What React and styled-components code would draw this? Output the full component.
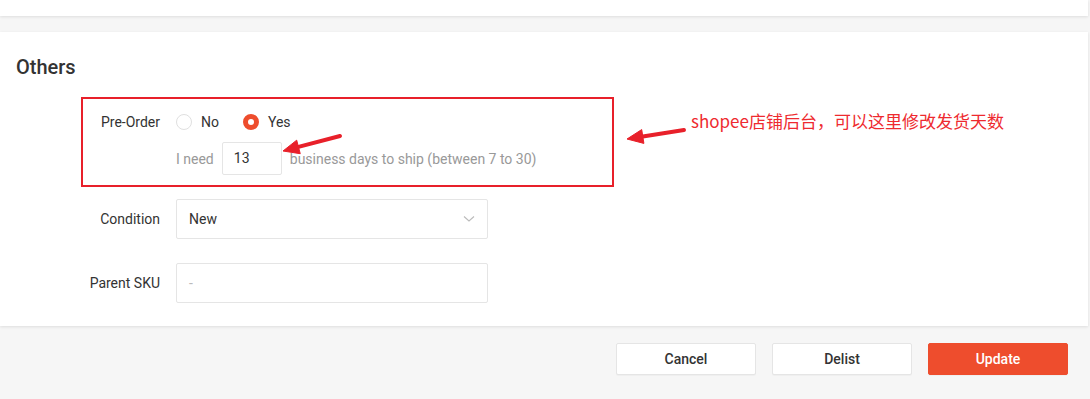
import React from 'react'
import styled, { createGlobalStyle } from 'styled-components'

const GlobalStyle = createGlobalStyle`
  html, body {
    margin: 0;
    padding: 0;
    background: #f6f6f6;
    font-family: Roboto, "Noto Sans", "Liberation Sans", sans-serif;
    color: #333;
  }
`

const Page = styled.div`
  position: relative;
  width: 1090px;
  height: 399px;
  overflow: hidden;
  background: #f6f6f6;
`

const TopCard = styled.div`
  height: 16px;
  margin-right: 2px;
  background: #fff;
  box-shadow: 0 1px 3px rgba(0, 0, 0, 0.1);
`

const Card = styled.div`
  margin-top: 16px;
  margin-right: 2px;
  padding: 24px 16px 23px;
  background: #fff;
  box-shadow: 0 1px 3px rgba(0, 0, 0, 0.1);
`

const Title = styled.div`
  font-size: 20px;
  line-height: 22px;
  font-weight: 500;
  color: #333;
`

const Form = styled.div`
  margin-top: 33px;
  display: flex;
  flex-direction: column;
  gap: 24px;
`

const Row = styled.div`
  display: flex;
  align-items: flex-start;
  gap: 16px;
`

const Label = styled.div`
  width: 144px;
  text-align: right;
  font-size: 14px;
  line-height: ${p => p.$lh || 22}px;
  color: #333;
`

const Control = styled.div`
  display: flex;
  flex-direction: column;
  gap: 9px;
`

const RadioGroup = styled.div`
  display: flex;
  align-items: center;
  height: 22px;
  gap: 24px;
`

const RadioItem = styled.label`
  display: flex;
  align-items: center;
  gap: 9px;
  font-size: 14px;
  color: #333;
`

const RadioDot = styled.span`
  box-sizing: border-box;
  width: 16px;
  height: 16px;
  border-radius: 50%;
  border: ${p => (p.$on ? '5px solid #ee4d2d' : '1px solid #e0e0e0')};
  background: #fff;
`

const DaysLine = styled.div`
  display: flex;
  align-items: center;
  gap: 8px;
  font-size: 14px;
  color: #999;
`

const SmallInput = styled.div`
  box-sizing: border-box;
  width: 60px;
  height: 33px;
  padding: 0 11px;
  border: 1px solid #e5e5e5;
  border-radius: 2px;
  line-height: 31px;
  color: #333;
  font-size: 14px;
`

const Field = styled.div`
  box-sizing: border-box;
  width: 312px;
  height: 40px;
  padding: 0 12px;
  display: flex;
  align-items: center;
  justify-content: space-between;
  border: 1px solid #e5e5e5;
  border-radius: 2px;
  font-size: 14px;
  color: ${p => (p.$muted ? '#bbb' : '#333')};
`

const Footer = styled.div`
  display: flex;
  justify-content: flex-end;
  gap: 16px;
  padding: 17px 22px 0 0;
`

const Button = styled.button`
  box-sizing: border-box;
  width: 140px;
  height: 32px;
  border-radius: 2px;
  border: 1px solid ${p => (p.$primary ? '#ee4d2d' : '#e5e5e5')};
  background: ${p => (p.$primary ? '#ee4d2d' : '#fff')};
  color: ${p => (p.$primary ? '#fff' : '#333')};
  font-family: Roboto, "Liberation Sans", sans-serif;
  font-size: 14px;
  font-weight: 500;
  box-shadow: 0 1px 1px rgba(0, 0, 0, 0.03);
`

const Highlight = styled.div`
  position: absolute;
  left: 81px;
  top: 97px;
  width: 533px;
  height: 90px;
  box-sizing: border-box;
  border: 2px solid #e8202a;
  pointer-events: none;
`

const Note = styled.div`
  position: absolute;
  left: 691px;
  top: 109px;
  font-family: "Noto Sans CJK SC", "Liberation Sans", sans-serif;
  font-size: 17px;
  line-height: 24px;
  color: #ee2a2f;
  white-space: nowrap;
`

const Arrows = styled.svg`
  position: absolute;
  left: 0;
  top: 0;
  pointer-events: none;
`

const Chevron = () => (
  <svg width="12" height="8" viewBox="0 0 12 8">
    <path d="M1 1.5 L6 6 L11 1.5" fill="none" stroke="#bbb" strokeWidth="1.1" />
  </svg>
)

const Arrow = ({ x1, y1, x2, y2 }) => {
  const a = Math.atan2(y2 - y1, x2 - x1)
  const len = 16
  const w = 7
  const bx = x2 - Math.cos(a) * len
  const by = y2 - Math.sin(a) * len
  const px = -Math.sin(a) * w
  const py = Math.cos(a) * w
  return (
    <g fill="#e8202a" stroke="#e8202a">
      <line x1={x1} y1={y1} x2={bx} y2={by} strokeWidth="4" strokeLinecap="round" />
      <polygon points={`${x2},${y2} ${bx + px},${by + py} ${bx - px},${by - py}`} strokeWidth="1" />
    </g>
  )
}

export default function App () {
  return (
    <Page>
      <GlobalStyle />
      <TopCard />
      <Card>
        <Title>Others</Title>
        <Form>
          <Row>
            <Label>Pre-Order</Label>
            <Control>
              <RadioGroup>
                <RadioItem><RadioDot />No</RadioItem>
                <RadioItem><RadioDot $on />Yes</RadioItem>
              </RadioGroup>
              <DaysLine>
                I need
                <SmallInput>13</SmallInput>
                business days to ship (between 7 to 30)
              </DaysLine>
            </Control>
          </Row>
          <Row>
            <Label $lh={40}>Condition</Label>
            <Field>New<Chevron /></Field>
          </Row>
          <Row>
            <Label $lh={40}>Parent SKU</Label>
            <Field $muted>-</Field>
          </Row>
        </Form>
      </Card>
      <Footer>
        <Button>Cancel</Button>
        <Button>Delist</Button>
        <Button $primary>Update</Button>
      </Footer>
      <Highlight />
      <Note>shopee店铺后台，可以这里修改发货天数</Note>
      <Arrows width="1090" height="399">
        <Arrow x1={340} y1={136} x2={283} y2={151} />
        <Arrow x1={684} y1={130} x2={627} y2={139} />
      </Arrows>
    </Page>
  )
}
